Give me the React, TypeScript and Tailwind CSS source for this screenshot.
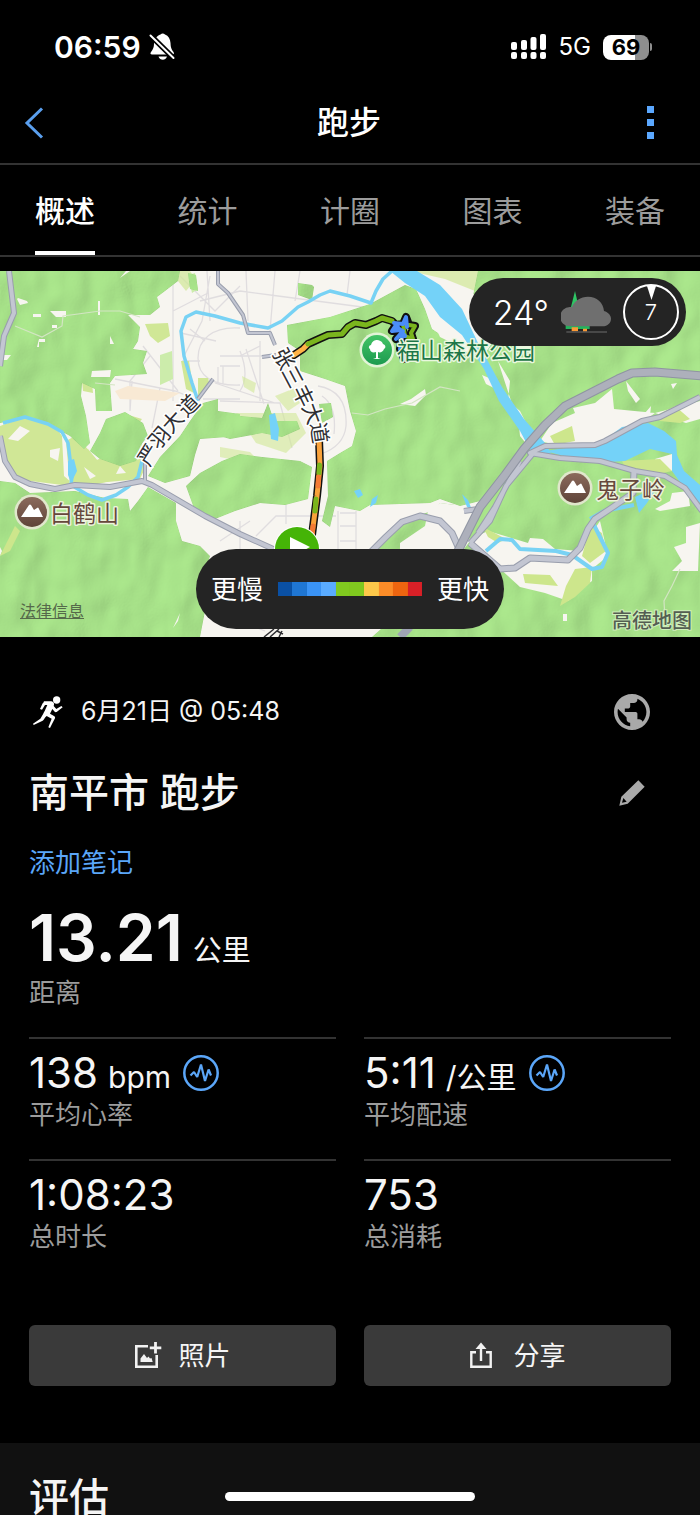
import { useState } from 'react';

const TABS = ['概述', '统计', '计圈', '图表', '装备'];

const PACE_COLORS = [
    'bg-[#0a50a4]',
    'bg-[#1f76d3]',
    'bg-[#3a93f5]',
    'bg-[#5aabff]',
    'bg-[#80c91f]',
    'bg-[#80c91f]',
    'bg-[#fdc84a]',
    'bg-[#fb8c28]',
    'bg-[#ed6510]',
    'bg-[#d82027]',
];

const STREET_CHARS = [
    { char: '张', x: 283, y: 88, angle: 62 },
    { char: '三', x: 292, y: 106, angle: 62 },
    { char: '丰', x: 303, y: 125, angle: 64 },
    { char: '大', x: 312, y: 143, angle: 70 },
    { char: '道', x: 319, y: 162, angle: 82 },
    { char: '严', x: 149, y: 184, angle: -58 },
    { char: '羽', x: 160, y: 167, angle: -50 },
    { char: '大', x: 173, y: 151, angle: -48 },
    { char: '道', x: 189, y: 135, angle: -45 },
];

const BellOffIcon = () => (
    <svg viewBox="0 0 26 28" className="w-[26px] h-7" aria-hidden="true">
        <path
            d="M11.500 1.500c1.300-1.300 3.200-1.300 4.500 0 3.500 1.200 5.300 4.500 5.500 8.500.2 4.500.8 6 3 9 .8 1.200.5 2.500-1 2.500H3c-1.600 0-2-1.300-1-2.500 2.200-3 3-4.500 3-9 .2-4 3-7.300 6.500-8.500z"
            fill="#fff"
        />
        <path d="M9.500 23.500h8.500c-.8 2.300-2.400 3.200-4.200 3.200s-3.500-.9-4.300-3.200z" fill="#fff" />
        <path d="M1 2 25 25.500" stroke="#000" strokeWidth="5.500" />
        <path d="M1.500 2.500 24.500 25" stroke="#fff" strokeWidth="2" strokeLinecap="round" />
    </svg>
);

const SignalIcon = () => (
    <svg viewBox="0 0 36 26" className="w-9 h-[26px]" fill="#fff" aria-hidden="true">
        <rect x="0" y="8" width="6" height="8" rx="2" />
        <rect x="10" y="6" width="6" height="10" rx="2" />
        <rect x="19.500" y="3" width="6" height="13" rx="2" />
        <rect x="29" y="0" width="6" height="16" rx="2" />
        <rect x="0" y="18" width="6" height="7" rx="2" />
        <rect x="10" y="18" width="6" height="7" rx="2" />
        <rect x="19.500" y="18" width="6" height="7" rx="2" />
        <rect x="29" y="18" width="6" height="7" rx="2" />
    </svg>
);

const RunnerIcon = () => (
    <svg viewBox="100 50 90 96" className="w-[30px] h-8" fill="#fff" aria-hidden="true">
        <circle cx="171" cy="62" r="11" />
        <path d="M133 66h22c6 1 9 5 8 10l-1 4 8 9 15-9 4 4-18 14c-3 1-5 0-6-1l-7-8-7 14 12 7c3 2 4 4 3 7l-9 17-6 12-5-2 5-13 5-13-15-8-4 4-4 6c-1 2-2 3-4 4l-27 13-2-4 22-15 8-13c2-4 3-7 5-10l8-18h-7l-9 14-6-2 8-17c1-1 2-2 2-2z" />
    </svg>
);

const GlobeIcon = () => (
    <svg viewBox="2 2 20 20" className="size-9" fill="#a9a9a9" aria-hidden="true">
        <path d="M12 2C6.480 2 2 6.480 2 12s4.480 10 10 10 10-4.480 10-10S17.520 2 12 2zm-1 17.930c-3.950-.49-7-3.850-7-7.930 0-.62.080-1.210.21-1.790L9 15v1c0 1.100.9 2 2 2v1.930zm6.900-2.540c-.26-.81-1-1.390-1.900-1.390h-1v-3c0-.55-.45-1-1-1H8v-2h2c.55 0 1-.45 1-1V7h2c1.100 0 2-.9 2-2v-.41c2.930 1.190 5 4.060 5 7.410 0 2.080-.8 3.970-2.100 5.390z" />
    </svg>
);

const PencilIcon = () => (
    <svg viewBox="0 0 78 78" className="size-[26px]" fill="#a9a9a9" fillRule="evenodd" aria-hidden="true">
        <path d="M58 1 77 20 26 71 1 77 7 50zM13 54 9 68 23 65z" />
    </svg>
);

const PulseIcon = () => (
    <svg viewBox="0 0 36 36" className="size-9" fill="none" stroke="#5ba6f8" aria-hidden="true">
        <circle cx="18" cy="18" r="16.700" strokeWidth="2.500" />
        <path d="M7.500 20.500 11 17l3.200 5L18 9.500l4 16.500 3.600-11.500 2.400 6" strokeWidth="2.200" strokeLinejoin="bevel" />
    </svg>
);

const PhotoIcon = () => (
    <svg viewBox="0 0 28 28" className="size-7" aria-hidden="true">
        <path d="M14 4.300H2.300v20.400h20.400V13" fill="none" stroke="#f2f2f2" strokeWidth="2.600" />
        <path d="M21.500 0v11.500M15.800 5.800h11.500" stroke="#f2f2f2" strokeWidth="2.800" />
        <path d="M6.500 20v-3.500L10 12l3 4 1.500-1.500 1.500 2 1.500-.5 1.200 4z" fill="#f2f2f2" />
    </svg>
);

const ShareIcon = () => (
    <svg viewBox="0 0 24 28" className="w-6 h-7" aria-hidden="true">
        <path d="M7 10.300H2.300v14.400h19.400V10.300H17M12 3v16" fill="none" stroke="#f2f2f2" strokeWidth="2.400" />
        <path d="M6.500 7 12 .500 17.500 7z" fill="#f2f2f2" />
    </svg>
);

const WeatherIcon = () => (
    <svg viewBox="0 0 150 126" className="w-[50px] h-[42px]" aria-hidden="true">
        <path d="M42 0 53 48H30z" fill="#2fc565" />
        <path d="M14 102h72v12H14z" fill="#22b35c" />
        <path d="M32 109h19v12H32zM66 113h12v9H66z" fill="#fb9a35" />
        <path d="M26 106a29 29 0 0 1 1-58h6c6-18 26-31 48-31 26 0 46 17 48 43 13 4 21 13 21 23 0 12-10 23-25 23z" fill="#6f6f6f" />
        <path d="M16 123h122" stroke="#555" strokeWidth="4" />
    </svg>
);

const Summit = ({ x, y }: { x: number; y: number }) => (
    <g transform={`translate(${x} ${y})`}>
        <circle r="17.500" fill="#ebe9d8" opacity="0.85" />
        <circle r="15" fill="url(#peak)" />
        <path d="M-11 5-3-7q1-1 2 0l3 5 3-2q1-1 1.500 0L11 5z" fill="#fff" />
    </g>
);

const ActivityMap = () => (
    <svg
        viewBox="0 0 700 366"
        className="block w-full h-auto font-['Noto_Sans_CJK_SC',sans-serif]"
        role="img"
        aria-label="跑步路线"
    >
        <defs>
            <filter id="relief" x="0" y="0" width="1" height="1" colorInterpolationFilters="sRGB">
                <feTurbulence type="fractalNoise" baseFrequency="0.03 0.022" numOctaves="2" seed="7" />
                <feColorMatrix values="0 0 0 0 0 0 0 0 0 0 0 0 0 0 0 1 0 0 0 0" />
                <feDiffuseLighting surfaceScale="5" diffuseConstant="1" lightingColor="#fff" result="light">
                    <feDistantLight azimuth="215" elevation="62" />
                </feDiffuseLighting>
                <feComposite in="SourceGraphic" in2="light" operator="arithmetic" k1="0.4" k2="0.64" />
            </filter>
            <linearGradient id="peak" x1="0" y1="0" x2="0" y2="1">
                <stop offset="0" stopColor="#8b6a5c" />
                <stop offset="1" stopColor="#5f4439" />
            </linearGradient>
            <linearGradient id="park" x1="0" y1="0" x2="0" y2="1">
                <stop offset="0" stopColor="#43c466" />
                <stop offset="1" stopColor="#1c9a4f" />
            </linearGradient>
        </defs>

        <rect width="700" height="366" fill="#f7f5f0" />

        {/* local streets */}
        <g fill="none" stroke="#e0dddf" strokeWidth="1.300">
            <path d="M180 5 215 40 240 15M173 0v130M173 40l35-18M181 62l35 8M200 130 175 120 115 108M143 75l35 45M150 85l-20 25v30M132 110l-2 30M160 117l-8 40M184 85l18-35 8-45M207 0l3 50" />
            <path d="M240 57c-28-2-42 12-42 30s14 28 42 27M200 90h-18M205 70l-15-12M223 95v18M218 96v17M240 95h-20M203 128h37M240 85l20-10M246 0l2 50M240 20l38 5 92 12M275 0l-5 60M300 0l-5 30M240 20l-40 10M350 0l-3 24" />
            <path d="M240 80q10 25 0 40M246 78l18 55M260 70v60M220 85h50M220 130l60 2 12 45M318 115q30 5 28 40-2 20-25 28M322 125q15 10 12 38M215 112l60 20" />
            <path d="M240 250v30M256 265l20-20h60M286 225v28M338 240v45M356 240v45M340 242h16M340 255h16M340 270h16M220 270l30-20M425 280l12-15 12 15M215 340l50 20M370 345l20 20" />
        </g>
        <path d="M115 120 128 115 180 122 165 130 120 128z" fill="#f8e9d4" />

        {/* parks and farmland */}
        <g fill="#d0e796">
            <path d="M145 53 168 52 170 65 158 72 150 65z" />
            <path d="M0 155 25 146 55 155 62 165 64 205 72 212 90 215 130 205 142 180 130 172 95 190 86 176 75 165 66 170 70 215 15 208 0 180z" />
            <path d="M70 172 88 178 98 190 142 172 146 195 140 208 75 214z" />
            <path d="M122 142 142 148 136 156 122 152zM82 110 92 112 93 122 83 120zM181 90l8 0 5 32-8-4zM198 107l10 0 2 8-12 12z" />
            <path d="M242 105 256 112 254 122 244 116zM275 125l20-8 5 15-12 8zM220 176l30 5 15 15-15-4-30-6zM236 142l60 0 10 20-20 20-30-10z" opacity="0.6" />
            <path d="M170 0 190 0 196 8 186 20zM410 0h70l-5 20-30-12z" opacity="0.7" />
        </g>
        <g fill="#ccecab">
            <path d="M160 84 172 80 173 108 160 114zM188 4 195 2 198 18 192 22z" />
        </g>

        {/* forest */}
        <g filter="url(#relief)" fill="#a7e289">
            <path d="M0 0H180L178 10 165 20 157 26 160 36 150 44H128L140 56 138 70 133 78 147 80 143 92 147 103 115 105 110 112 112 140H96L95 118 82 112 81 125 86 145 90 172 84 178 70 165 48 153 25 147 0 152z" />
            <path d="M100 162 106 148 125 141 143 152 148 165 140 175 136 190 120 195 100 188 90 180z" />
            <path d="M218 128V140L240 143V165L200 168 195 184 190 205 165 212 148 205 160 186 180 165 190 150 203 132z" />
            <path d="M186 215 200 202 222 190 240 183 262 186 300 190 312 196 308 228 285 234 260 232 235 240 215 248 195 240z" />
            <path d="M220 143 262 147 268 132 274 150 297 150 300 158 282 166 262 162 230 168 220 165z" />
            <path d="M298 12 312 14 314 16 312 29 298 24z" />
            <path d="M319 133 331 132 333 146 322 152z" />
            <path d="M188 2 196 4 198 20 190 18z" />
            <path d="M0 210 15 212 30 222 75 220 105 227 128 228 130 240 138 230 148 216 176 232 176 250 182 270 200 275 210 285 202 310 205 340 200 366H0z" />
            <path d="M287 54 330 46 370 33 405 14 416 18 425 38 432 58 450 70 462 78 480 90 500 60 470 40 478 0H700V366H372L390 350 368 300 370 280 390 262 410 247 432 240 440 232 455 234 455 250 468 256 480 230 460 235 440 228 430 232 370 234 360 240 335 235 330 256 322 250 328 225 327 190 340 182 352 175 356 160 350 140 345 115 325 108 300 100 300 80 288 72z" />
        </g>

        {/* clearings */}
        <g fill="#f7f5f0">
            <path d="M17 28 20 34 28 32 27 30 18 27zM33 43h8v3h-8zM50 40h16v6H56zM52 54h5v3h-5zM98 30h2v14h-2zM39 68h6v3h-6v5h-2zM0 84h11l-4 5H0zM110 65l4 8h-4zM120 7l6-7h4zM92 100 111 99 110 106H91zM20 155l10 5-12 10-10-2zM50 179 60 177 58 190 50 186zM84 196 96 205 90 208zM120 195 126 202 116 203z" />
            <path d="M0 285 2 280 0 276zM173 357 180 342 178 350z" />
            <path d="M400 133 411 128 425 118 426 124 415 135zM460 18 478 25 480 40 460 30zM482 104 496 110 500 120 486 113zM498 90 510 110 508 130 520 140 530 160 515 142zM518 145 528 175 520 165z" />
            <path d="M540 170 552 152 575 142 573 137 595 132 612 118 614 138 655 142 640 153 605 172 560 175zM626 110 640 128 636 132 628 120zM671 113 677 112 673 118zM655 142 700 130V148L686 152zM645 142 651 135 650 145z" />
            <path d="M655 238 670 230 672 222 688 220 690 235 660 240zM655 188 672 183 673 200 660 198zM700 252 686 256 686 272 674 276 682 290 672 300 698 300zM563 343h4v7h-4z" />
            <path d="M470 268 488 260 528 272 530 267 543 268 555 278 580 280 600 250 608 285 592 298 592 310 580 319 568 330 545 322 520 316 508 305 486 285z" />
            <path d="M428 240 440 232 455 234 457 246 465 252 470 270 455 290 400 290 400 272 425 255zM428 40 440 45 447 62 460 66 452 72 440 66z" />
        </g>
        <g fill="#cde68c">
            <path d="M590 255 602 262 606 280 590 292 582 285zM523 303 550 304 558 315 525 312zM575 298 592 296 590 312 575 326 560 335 566 315zM483 256 506 268 498 272 488 266z" />
            <path d="M622 190 660 188 672 200 655 204 625 196zM655 145 675 135 690 148 680 152 660 150zM550 165 572 155 575 170 555 174zM0 285 15 255 20 260 10 280z" />
        </g>

        {/* water */}
        <g fill="#74d2f8">
            <path d="M390 0H417L440 14 462 38 478 72 502 116 524 148 545 172 552 184 534 186 520 160 499 130 484 98 462 64 440 46 425 25 405 12z" />
            <path d="M545 180 600 172 622 156 648 152 664 160 676 170 677 184 684 200 700 214V232L685 218 672 200 672 183 650 178 625 190 590 192z" />
            <path d="M269 144 275 142 279 158 278 170 271 168zM354 220l6-2 3 6-5 3zM370 236l2-8 6-4-2 8zM462 223l6 6 4 10-5-3zM635 226l22-10-10 16-8 10z" />
        </g>
        <g fill="none" stroke="#78d2f4" strokeLinejoin="round">
            <path d="M198 130 192 112 184 85 181 60 186 46 196 41 215 45 240 52 268 57 282 50 298 36 308 31 320 24 330 20 350 25 371 32 376 20 383 8 392 0" strokeWidth="3.500" />
            <path d="M3 152 25 146 48 153 62 161 68 172 70 188 72 205 71 214 88 224 102 229 116 224 128 216 138 206 142 190" strokeWidth="3.500" />
            <path d="M486 280 500 268 512 269 520 278 556 280 572 284 592 298 602 296 608 282 600 266 594 254M590 248l14-8 30-6" strokeWidth="4" />
        </g>
        <path d="M68 190l6-2 3 12-6 12-3-8z" fill="#74d2f8" />

        {/* trunk roads */}
        {[
            { stroke: '#999ead', extra: 2 },
            { stroke: '#c3c6d2', extra: 0 },
        ].map(({ stroke, extra }) => (
            <g key={stroke} fill="none" stroke={stroke} strokeLinejoin="round">
                <path d="M9 0 14 42 4 65 0 95M0 165 5 190 15 206 30 213 55 218 75 214 110 216 142 210 152 214 205 245 240 263 300 290" strokeWidth={4 + extra} />
                <path d="M218 0V13L228 22 243 44 248 62H270L275 74M213 108 198 128M145 210V190M262 86l14-2" strokeWidth={2 + extra} />
                <path d="M370 282 386 266 402 251 420 245 440 250 452 262 460 280" strokeWidth={5 + extra} />
                <path d="M700 126 660 146 642 150 605 170 595 174 545 175 530 182 560 187 600 190 635 200 665 205 685 217 702 240" strokeWidth={4 + extra} />
                <path d="M634 200 633 222 610 238 595 248 588 258 580 277 568 289 530 287 515 297 500 298 470 272" strokeWidth={5 + extra} />
                <path d="M535 180 506 215 490 250 470 272M520 190 495 236 478 262M464 240 478 238 500 212" strokeWidth={4 + extra} />
            </g>
        ))}
        <path d="M702 105 655 101 632 102 618 108 565 135 545 154 524 178 505 204 480 236 458 280" fill="none" stroke="#8f94a2" strokeWidth="9" strokeLinejoin="round" />
        <path d="M702 105 655 101 632 102 618 108 565 135 545 154 524 178 505 204 480 236 458 280" fill="none" stroke="#adb0bb" strokeWidth="7" strokeLinejoin="round" />
        <path d="M400 366 410 356" stroke="#9fa4b4" strokeWidth="8" />
        <g fill="none" stroke="#d3e5c3" strokeWidth="1.200">
            <path d="M15 55 42 66 62 55 63 45 78 43 100 40 120 40 140 46M95 112 115 114M352 142 368 144 385 138 412 132 440 116 460 120M680 298 672 315 664 330 665 350" />
        </g>

        {/* recorded track */}
        <g fill="none" strokeLinejoin="round" strokeLinecap="round">
            <path
                d="M294 84 303 78 308 73 319 68 328 64 342 63 348 56 355 52 366 54 376 50 382 47 392 50 396 54 403 53 406 46 409 54 415 55 411 62 413 68 405 65 396 54 392 60 401 59M396 68 403 60M402 66 400 78 404 88M319 168 320 195 317 225 312 264"
                stroke="#111"
                strokeWidth="8"
            />
            <g strokeWidth="5">
                <path d="M294 84 303 78 308 73" stroke="#ffb347" />
                <path d="M308 73 319 68 328 64 342 63 348 56 355 52 366 54 376 50 382 47 392 50" stroke="#7ab51d" />
                <path d="M319 168 320 195 317 225 312 264" stroke="#f9a23b" />
                <path d="M319.500 194 319 202M316 228 315 240" stroke="#7ab51d" />
                <path d="M318.500 206 318 215M313 255 312 264" stroke="#f47a35" />
            </g>
            <g strokeWidth="4">
                <path d="M409 54 415 55 411 62 413 68 405 65 403 53" stroke="#7ab51d" />
                <path d="M394 52 403 53 406 46 407 56M405 65 396 54 392 60 401 59M396 68 403 60M402 66 400 78 404 88" stroke="#4b8df8" />
            </g>
        </g>
        <circle cx="297" cy="278" r="23" fill="#fff" />
        <circle cx="297" cy="278" r="22" fill="#45b407" />
        <path d="M290 266 310 276 290 287z" fill="#fff" />

        <g fill="#2f2f33" stroke="#fff" strokeWidth="3" paintOrder="stroke" fontSize="21" textAnchor="middle">
            {STREET_CHARS.map(({ char, x, y, angle }, i) => (
                <text key={i} transform={`translate(${x} ${y}) rotate(${angle})`} y="7">
                    {char}
                </text>
            ))}
        </g>
        <path d="M264 366 274 358M270 366l9-8M277 360l6 3M279 366l3-6" stroke="#2f2f33" strokeWidth="1.500" />

        <circle cx="377" cy="79" r="17.500" fill="#e8f5df" opacity="0.9" />
        <circle cx="377" cy="79" r="15" fill="url(#park)" />
        <path d="M376 87v-6c-3 1-6 0-6-3-2-1-1-4 1-4 1-4 4-5 6-5s5 1 6 4c3 1 3 4 1 5-1 3-4 4-6 3v6l3 1h-8z" fill="#fff" />
        <Summit x={32} y={241} />
        <Summit x={575} y={217} />
        <g fontSize="23" strokeWidth="3" paintOrder="stroke" strokeLinejoin="round">
            <text x="397" y="88" fill="#1d7647" stroke="#e9f7de">福山森林公园</text>
            <text x="50" y="251" fill="#66483c" stroke="#ecf3dc">白鹤山</text>
            <text x="596" y="227" fill="#66483c" stroke="#ecf3dc">鬼子岭</text>
        </g>
        <text x="612" y="357" fontSize="20" fontWeight="500" fill="#545e52" stroke="#d0eebb" strokeWidth="2" paintOrder="stroke">
            高德地图
        </text>
    </svg>
);

interface StatProps {
    value: string;
    unit?: string;
    label: string;
    pulse?: boolean;
}

const Stat = ({ value, unit, label, pulse }: StatProps) => (
    <div className="border-t-2 border-[#333] pt-[10px] pb-7">
        <div className="flex items-center h-12 gap-3">
            <span className="text-[42px] leading-[48px]">
                {value}
                {unit && <span className="ml-[10px] text-[30px] leading-none">{unit}</span>}
            </span>
            {pulse && (
                <button type="button" aria-label={`${label}图表`}>
                    <PulseIcon />
                </button>
            )}
        </div>
        <div className="text-[26px] leading-9 -mb-[2px] text-[#9c9c9c]">{label}</div>
    </div>
);

const App = () => {
    const [activeTab, setActiveTab] = useState('概述');

    return (
        <div className="h-screen overflow-hidden bg-black text-[#f5f5f5] font-['Inter','Noto_Sans_CJK_SC',sans-serif]">
            <div className="flex items-center justify-between h-[82px] pt-3 pl-[54px] pr-12 text-white">
                <div className="flex items-center gap-2">
                    <span className="text-[30px] leading-9 font-semibold">06:59</span>
                    <BellOffIcon />
                </div>
                <div className="flex items-center gap-3">
                    <SignalIcon />
                    <span className="text-2xl">5G</span>
                    <div className="flex items-center gap-px">
                        <div className="w-[46px] h-[25px] rounded-lg bg-linear-to-r from-white from-70% to-[#8e8e8e] to-70% text-black text-[22px] leading-[25px] font-bold text-center">
                            69
                        </div>
                        <div className="w-[2px] h-2 rounded-r-full bg-[#8e8e8e]"></div>
                    </div>
                </div>
            </div>

            <header className="grid grid-cols-3 items-center h-[83px] pl-6 pr-[46px] border-b-2 border-[#333]">
                <button type="button" aria-label="返回" className="justify-self-start">
                    <svg viewBox="0 0 20 32" className="w-5 h-8" fill="none" stroke="#5a9fee" strokeWidth="3">
                        <path d="M18 1.500 3 16l15 14.500" />
                    </svg>
                </button>
                <h1 className="pl-5 text-center text-[32px] leading-10 font-medium text-white">跑步</h1>
                <button type="button" aria-label="更多" className="justify-self-end flex flex-col gap-[6px]">
                    <span className="size-[7px] bg-[#5ba8ff]"></span>
                    <span className="size-[7px] bg-[#5ba8ff]"></span>
                    <span className="size-[7px] bg-[#5ba8ff]"></span>
                </button>
            </header>

            <nav className="flex justify-between h-[92px] px-[35px] border-b-2 border-[#333]">
                {TABS.map((tab) => (
                    <button
                        key={tab}
                        type="button"
                        onClick={() => setActiveTab(tab)}
                        className={`h-full pt-[6px] border-b-4 text-[30px] ${
                            activeTab === tab
                                ? 'border-white font-medium text-white'
                                : 'border-transparent text-[#9c9c9c]'
                        }`}
                    >
                        {tab}
                    </button>
                ))}
            </nav>

            <section className="relative mt-[14px]">
                <ActivityMap />
                <div className="absolute top-[7px] right-[14px] flex items-center h-[68px] pl-6 pr-[7px] rounded-full bg-[#242424] text-white">
                    <span className="text-[34px] font-light">24°</span>
                    <span className="ml-3">
                        <WeatherIcon />
                    </span>
                    <div className="relative flex items-center justify-center ml-3 size-14 rounded-full border-2 border-white text-[22px] font-light">
                        7
                        <svg viewBox="0 0 9 14" className="absolute top-0 w-[9px] h-[14px]" fill="#fff" aria-hidden="true">
                            <path d="M0 0h9L4.500 14z" />
                        </svg>
                    </div>
                </div>
                <a href="#legal" className="absolute left-5 bottom-[14px] text-base leading-6 text-[#55694a] underline">
                    法律信息
                </a>
                <div className="absolute bottom-2 left-1/2 -translate-x-1/2 flex items-center gap-[15px] h-20 px-[15px] rounded-full bg-[#242424] text-[26px] text-white whitespace-nowrap">
                    <span>更慢</span>
                    <div className="flex w-36 h-[14px]">
                        {PACE_COLORS.map((color, i) => (
                            <div key={i} className={`flex-1 ${color}`}></div>
                        ))}
                    </div>
                    <span>更快</span>
                </div>
            </section>

            <main className="px-[29px] pt-[57px] pb-[57px]">
                <div className="flex items-center justify-between h-9 pl-1 pr-[21px]">
                    <div className="flex items-center gap-[18px]">
                        <RunnerIcon />
                        <span className="text-[25px]">6月21日 @ 05:48</span>
                    </div>
                    <button type="button" aria-label="隐私">
                        <GlobeIcon />
                    </button>
                </div>
                <div className="flex items-center justify-between mt-[33px] pr-[26px]">
                    <h2 className="text-[40px] leading-[60px] font-medium">南平市 跑步</h2>
                    <button type="button" aria-label="编辑">
                        <PencilIcon />
                    </button>
                </div>
                <button type="button" className="block mt-5 text-[26px] leading-10 text-[#5ba6f8]">
                    添加笔记
                </button>
                <div className="mt-5 text-[64px] leading-[70px] font-semibold">
                    13.21<span className="ml-[10px] text-[29px] leading-none font-normal">公里</span>
                </div>
                <div className="text-[26px] leading-10 text-[#9c9c9c]">距离</div>

                <div className="grid grid-cols-2 gap-x-7 mt-6">
                    <Stat value="138" unit="bpm" label="平均心率" pulse />
                    <Stat value="5:11" unit="/公里" label="平均配速" pulse />
                    <Stat value="1:08:23" label="总时长" />
                    <Stat value="753" label="总消耗" />
                </div>

                <div className="grid grid-cols-2 gap-7 mt-11">
                    <button type="button" className="flex items-center justify-center gap-4 h-[61px] rounded-md bg-[#3a3a3a] text-[26px]">
                        <PhotoIcon />
                        照片
                    </button>
                    <button type="button" className="flex items-center justify-center gap-5 h-[61px] rounded-md bg-[#3a3a3a] text-[26px]">
                        <ShareIcon />
                        分享
                    </button>
                </div>
            </main>

            <section className="px-[29px] pt-[25px] pb-10 bg-[#111]">
                <h2 className="text-[40px] leading-[60px] font-medium">评估</h2>
            </section>

            <div className="fixed bottom-[14px] left-1/2 -translate-x-1/2 w-[250px] h-[9px] rounded-full bg-white"></div>
        </div>
    );
};

export default App;
